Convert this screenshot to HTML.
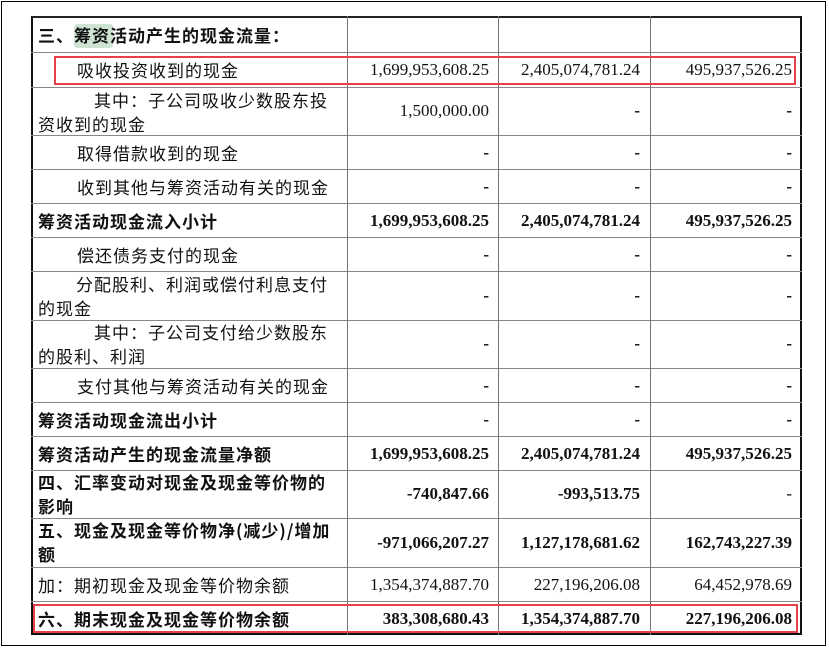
<!DOCTYPE html>
<html><head><meta charset="utf-8"><style>
body{margin:0;width:829px;height:649px;background:#fff;position:relative;overflow:hidden}
.frame{position:absolute;left:1px;top:1px;width:825px;height:645px;border:1px solid #000;box-sizing:border-box}
.t{position:absolute;left:31px;top:16px;width:771px;height:619px;border:2px solid #111;border-top:2px solid #222;box-sizing:border-box}
.h{position:absolute;left:31px;width:771px;height:1px;background:#888}
.v{position:absolute;top:16px;height:619px;width:1px;background:#777}
.c{position:absolute;font-family:"Noto Sans CJK SC","WenQuanYi Zen Hei",sans-serif;font-size:17px;letter-spacing:1px;color:#111;line-height:24px;left:38px;width:300px}
.n{position:absolute;font-family:"Liberation Serif",serif;font-size:17px;color:#111;text-align:right;line-height:24px}
.b{font-weight:bold}
.r{position:absolute;border:2px solid #e8404a;box-sizing:border-box}
</style></head><body>
<div class="frame"></div>
<div class="t"></div>
<div class="h" style="top:52px"></div><div class="h" style="top:87px"></div><div class="h" style="top:135px"></div><div class="h" style="top:169px"></div><div class="h" style="top:203px"></div><div class="h" style="top:237px"></div><div class="h" style="top:271px"></div><div class="h" style="top:320px"></div><div class="h" style="top:368px"></div><div class="h" style="top:402px"></div><div class="h" style="top:436px"></div><div class="h" style="top:470px"></div><div class="h" style="top:518px"></div><div class="h" style="top:567px"></div><div class="h" style="top:601px"></div>
<div class="v" style="left:347px"></div><div class="v" style="left:498px"></div><div class="v" style="left:650px"></div>
<div style="position:absolute;left:74px;top:24px;width:39px;height:24px;background:#cfe3d3;border-radius:3px"></div>
<div class="r" style="left:54px;top:56px;width:742px;height:29px"></div>
<div class="r" style="left:33px;top:604px;width:765px;height:29px"></div>

<div class="c b" style="top:23px">三、筹资活动产生的现金流量：</div>
<div class="c" style="top:58px;left:77px">吸收投资收到的现金</div>
<div class="c" style="top:88px;width:300px"><span style="padding-left:56px">其中：子公司吸收少数股东投</span><br>资收到的现金</div>
<div class="c" style="top:141px;left:77px">取得借款收到的现金</div>
<div class="c" style="top:175px;left:77px">收到其他与筹资活动有关的现金</div>
<div class="c b" style="top:209px">筹资活动现金流入小计</div>
<div class="c" style="top:243px;left:77px">偿还债务支付的现金</div>
<div class="c" style="top:272px"><span style="padding-left:38px">分配股利、利润或偿付利息支付</span><br>的现金</div>
<div class="c" style="top:320px"><span style="padding-left:56px">其中：子公司支付给少数股东</span><br>的股利、利润</div>
<div class="c" style="top:374px;left:77px">支付其他与筹资活动有关的现金</div>
<div class="c b" style="top:408px">筹资活动现金流出小计</div>
<div class="c b" style="top:442px">筹资活动产生的现金流量净额</div>
<div class="c b" style="top:470px">四、汇率变动对现金及现金等价物的<br>影响</div>
<div class="c b" style="top:518px">五、现金及现金等价物净(减少)/增加<br>额</div>
<div class="c" style="top:573px">加：期初现金及现金等价物余额</div>
<div class="c b" style="top:607px">六、期末现金及现金等价物余额</div>

<div class="n" style="top:58px;left:350px;width:139px">1,699,953,608.25</div>
<div class="n" style="top:58px;left:501px;width:139px">2,405,074,781.24</div>
<div class="n" style="top:58px;left:653px;width:139px">495,937,526.25</div>
<div class="n" style="top:99px;left:350px;width:139px">1,500,000.00</div>
<div class="n b" style="top:99px;left:501px;width:139px">-</div><div class="n b" style="top:99px;left:653px;width:139px">-</div>
<div class="n b" style="top:141px;left:350px;width:139px">-</div><div class="n b" style="top:141px;left:501px;width:139px">-</div><div class="n b" style="top:141px;left:653px;width:139px">-</div>
<div class="n b" style="top:175px;left:350px;width:139px">-</div><div class="n b" style="top:175px;left:501px;width:139px">-</div><div class="n b" style="top:175px;left:653px;width:139px">-</div>
<div class="n b" style="top:209px;left:350px;width:139px">1,699,953,608.25</div>
<div class="n b" style="top:209px;left:501px;width:139px">2,405,074,781.24</div>
<div class="n b" style="top:209px;left:653px;width:139px">495,937,526.25</div>
<div class="n b" style="top:243px;left:350px;width:139px">-</div><div class="n b" style="top:243px;left:501px;width:139px">-</div><div class="n b" style="top:243px;left:653px;width:139px">-</div>
<div class="n b" style="top:284px;left:350px;width:139px">-</div><div class="n b" style="top:284px;left:501px;width:139px">-</div><div class="n b" style="top:284px;left:653px;width:139px">-</div>
<div class="n b" style="top:332px;left:350px;width:139px">-</div><div class="n b" style="top:332px;left:501px;width:139px">-</div><div class="n b" style="top:332px;left:653px;width:139px">-</div>
<div class="n b" style="top:374px;left:350px;width:139px">-</div><div class="n b" style="top:374px;left:501px;width:139px">-</div><div class="n b" style="top:374px;left:653px;width:139px">-</div>
<div class="n b" style="top:408px;left:350px;width:139px">-</div><div class="n b" style="top:408px;left:501px;width:139px">-</div><div class="n b" style="top:408px;left:653px;width:139px">-</div>
<div class="n b" style="top:442px;left:350px;width:139px">1,699,953,608.25</div>
<div class="n b" style="top:442px;left:501px;width:139px">2,405,074,781.24</div>
<div class="n b" style="top:442px;left:653px;width:139px">495,937,526.25</div>
<div class="n b" style="top:482px;left:350px;width:139px">-740,847.66</div>
<div class="n b" style="top:482px;left:501px;width:139px">-993,513.75</div>
<div class="n" style="top:482px;left:653px;width:139px">-</div>
<div class="n b" style="top:531px;left:350px;width:139px">-971,066,207.27</div>
<div class="n b" style="top:531px;left:501px;width:139px">1,127,178,681.62</div>
<div class="n b" style="top:531px;left:653px;width:139px">162,743,227.39</div>
<div class="n" style="top:573px;left:350px;width:139px">1,354,374,887.70</div>
<div class="n" style="top:573px;left:501px;width:139px">227,196,206.08</div>
<div class="n" style="top:573px;left:653px;width:139px">64,452,978.69</div>
<div class="n b" style="top:607px;left:350px;width:139px">383,308,680.43</div>
<div class="n b" style="top:607px;left:501px;width:139px">1,354,374,887.70</div>
<div class="n b" style="top:607px;left:653px;width:139px">227,196,206.08</div>
</body></html>
